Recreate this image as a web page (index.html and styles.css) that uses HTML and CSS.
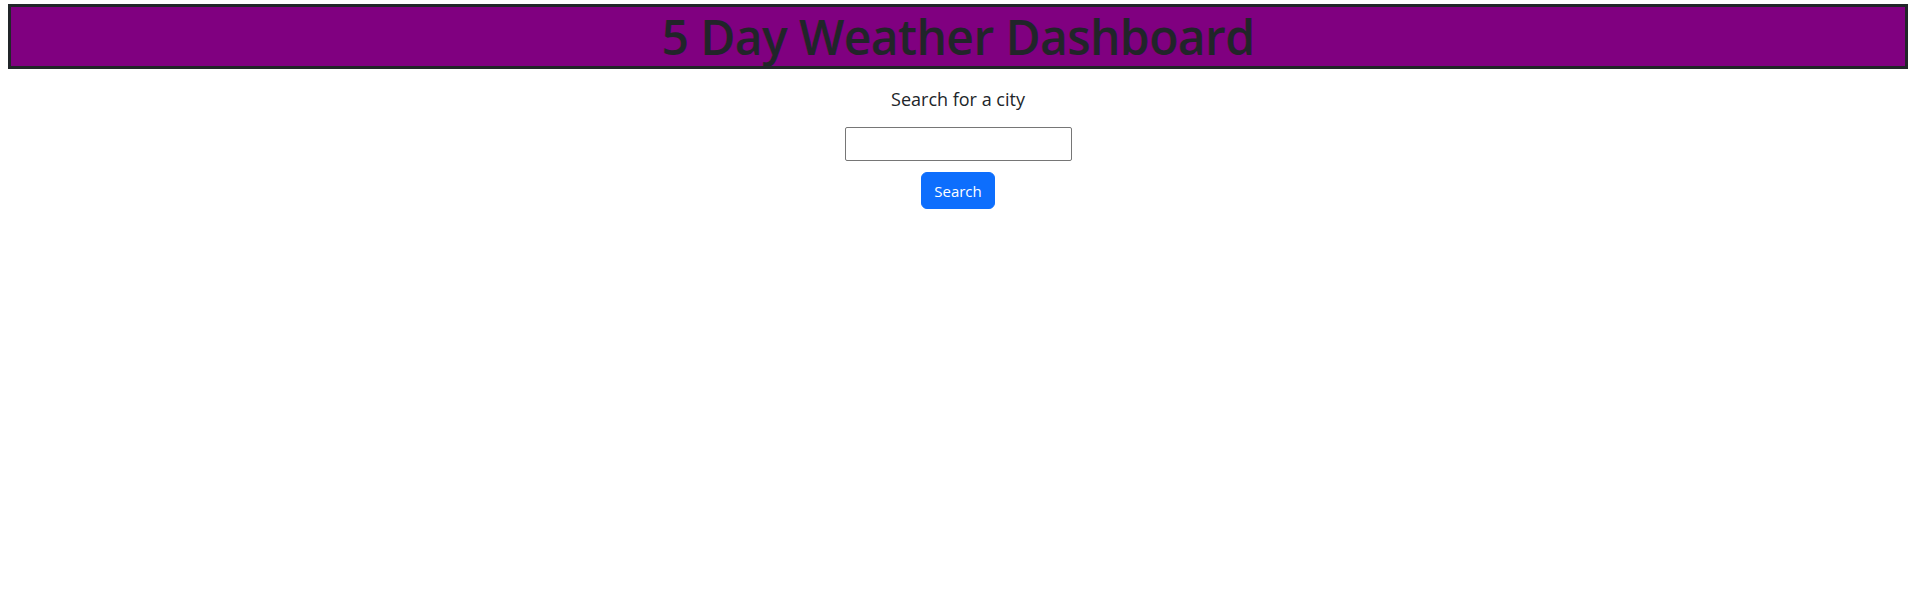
FILE: index.html
```html
<!DOCTYPE html>
<html lang="en">
<head>
<meta charset="utf-8">
<title>5 Day Weather Dashboard</title>
<link rel="stylesheet" href="styles.css">
</head>
<body>
<header class="banner">
  <h1 class="banner-title">5 Day Weather Dashboard</h1>
</header>
<main class="search">
  <p class="search-label">Search for a city</p>
  <input class="search-input" type="text" aria-label="City">
  <button class="search-btn" type="button">Search</button>
</main>
</body>
</html>
```
FILE: styles.css
```css
html, body {
  background: #fff;
}
body {
  margin: 4px 8px;
  font-family: "Open Sans", "Noto Sans", sans-serif;
  font-size: 16px;
  line-height: 1.5;
  color: #212529;
}
.banner {
  background: #800080;
  border: 3px solid #212529;
  text-align: center;
}
.banner-title {
  margin: 0;
  padding-top: 1px;
  font-size: 48px;
  font-weight: 600;
  line-height: 58px;
  letter-spacing: -0.6px;
  color: #212529;
}
.search {
  display: flex;
  flex-direction: column;
  align-items: center;
}
.search-label {
  margin: 17px 0 0;
  font-size: 18px;
  line-height: 27px;
}
.search-input {
  margin-top: 14px;
  width: 227px;
  height: 34px;
  box-sizing: border-box;
  border: 1px solid #767676;
  border-radius: 2px;
  font: inherit;
  padding: 1px 2px;
}
.search-btn {
  margin-top: 11px;
  width: 74px;
  height: 37px;
  box-sizing: border-box;
  background: #0d6efd;
  color: #fff;
  border: 1px solid #0d6efd;
  border-radius: 6px;
  font-family: inherit;
  font-size: 15px;
  padding: 0;
}
```
